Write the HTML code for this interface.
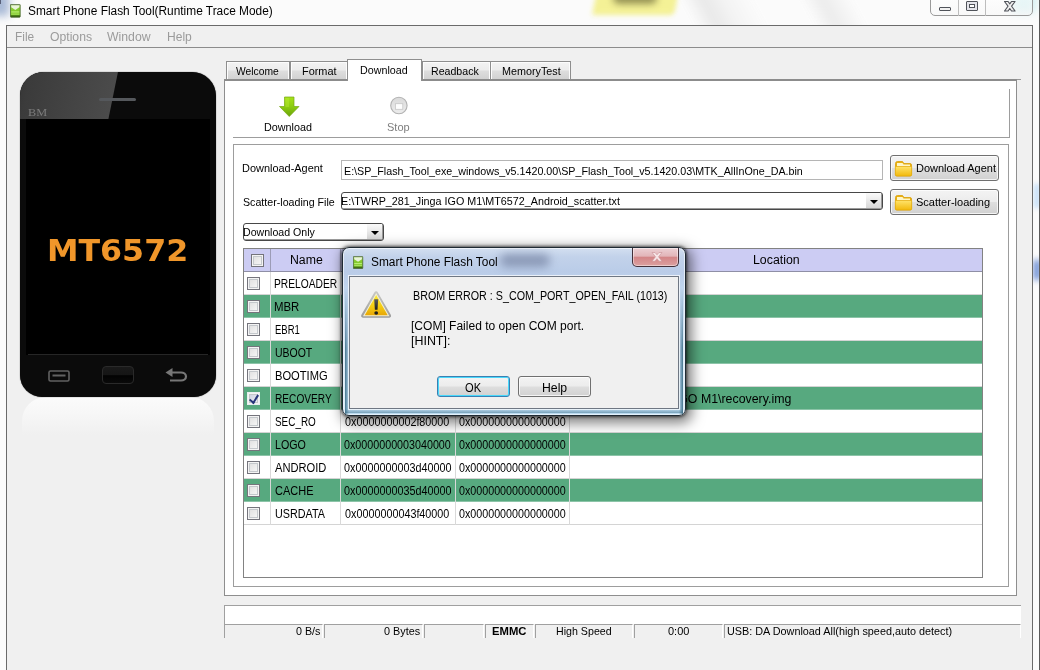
<!DOCTYPE html>
<html lang="en">
<head>
<meta charset="utf-8">
<title>Smart Phone Flash Tool(Runtime Trace Mode)</title>
<style>
*{box-sizing:border-box;margin:0;padding:0}
html,body{width:1040px;height:670px;overflow:hidden;background:#fff}
body{position:relative;font-family:"Liberation Sans",sans-serif;font-size:11px;color:#000}
.a{position:absolute}
.t{position:absolute;white-space:nowrap;line-height:1;font-size:11px;transform-origin:0 0}
/* ---------- window frame ---------- */
#glass{left:0;top:0;width:1040px;height:670px;background:#fbfbfb;overflow:hidden}
#client{left:6px;top:25px;width:1027px;height:660px;background:#f0f0f0;border:1px solid #6a6a6a}
#menuline{left:7px;top:47px;width:1025px;height:1px;background:#8c8c8c}
.menu{color:#9b9b9b;font-size:12px}
/* ---------- caption buttons ---------- */
#capbtn{left:930px;top:-4px;width:103px;height:20px;border:1px solid #9a9a9a;border-radius:0 0 5px 5px;background:linear-gradient(rgba(255,255,255,.55),rgba(246,246,246,.5))}
/* ---------- phone ---------- */
#phone{left:20px;top:72px;width:196px;height:325px;border-radius:24px 24px 22px 22px;background:#0b0b0b;overflow:hidden;box-shadow:0 0 1px #222}
#glare{left:-12px;top:-10px;width:112px;height:57px;background:linear-gradient(90deg,#2e2e2e 0%,#3b3b3b 22%,#444 65%,#4b4b4b 100%);transform-origin:0 0;transform:skewX(-11.500deg)}
#screen{left:6px;top:47px;width:184px;height:236px;background:#000}
#refl{left:22px;top:397px;width:192px;height:40px;background:linear-gradient(#fbfbfb,#f7f7f7 40%,#f0f0f0 95%);border-radius:24px 24px 0 0}
/* ---------- tabs ---------- */
.tab{position:absolute;top:61px;height:18px;border:1px solid #8e8e8e;border-bottom:none;background:linear-gradient(#f3f3f3 0%,#ececec 48%,#dedede 52%,#d2d2d2 100%);box-shadow:inset 1px 1px 0 #fcfcfc,inset -1px 0 0 #fcfcfc}
#tabsel{top:59px;height:22px;background:#fff;border-color:#8e8e8e;box-shadow:none}
#pane{left:224px;top:79px;width:793px;height:517px;background:#fff;border:1px solid #8e8e8e;border-top:2px solid #8c8c8c}
.ln{position:absolute;background:#9d9d9d}
/* ---------- widgets ---------- */
.btn{position:absolute;border:1px solid #707070;border-radius:3px;background:linear-gradient(#f3f3f3 0%,#ececec 48%,#dedede 52%,#d1d1d1 100%);box-shadow:inset 0 0 0 1px rgba(255,255,255,.75)}
.combo{position:absolute;background:#fff;border:1px solid #484848;border-radius:3px;box-shadow:inset -1px -1px 0 #9a9a9a}
.cbtn{position:absolute;top:0;bottom:1px;right:1px;width:15px;background:linear-gradient(#fafafa,#d8d8d8)}
.cbtn:after{content:"";position:absolute;left:4px;top:7px;border:4px solid transparent;border-top:4px solid #000;border-bottom:none}
/* ---------- table ---------- */
#tbl{left:243px;top:248px;width:740px;height:330px;background:#fff;border:1px solid #828282}
#thead{left:0;top:0;width:738px;height:22px;background:#ccccf3}
.row{position:absolute;left:0;width:738px;height:23px;border-bottom:1px solid #d4d4d4}
.g{background:#57a97f;border-bottom-color:#8cc4a8}
.vl{position:absolute;top:0;width:1px;height:276px;background:#d9d9d9}
.cb{position:absolute;left:3px;width:13px;height:13px;border:1px solid #74747c;background:linear-gradient(135deg,#dcdcdc,#fbfbfb);box-shadow:inset 0 0 0 1px #f4f4f4,inset 0 0 0 2px #c4c8cc}
.ck{border-color:#e8eef0;background:linear-gradient(135deg,#c8ccdc,#f4f6fa)}
.ck:after{content:"";position:absolute;left:3px;top:0px;width:4px;height:8px;border:solid #26357a;border-width:0 2px 2px 0;transform:rotate(40deg) skewX(8deg)}
.cell{position:absolute;white-space:nowrap;line-height:1;font-size:12px;transform-origin:0 0}
.s12{font-size:12px}
/* ---------- status ---------- */
.sc{position:absolute;top:624px;height:14px;border-right:1px solid #fff;border-top:1px solid #a0a0a0;border-left:1px solid #a0a0a0}
/* ---------- dialog ---------- */
#dlg{left:342px;top:247px;width:344px;height:169px;border-radius:7px;border:1px solid #1f2a33;background:linear-gradient(180deg,#d3dff0 0%,#c2d2ea 9px,#bacce8 24px,#c0d5ee 40px,#badaf0 100%);box-shadow:inset 0 0 0 1px rgba(255,255,255,.6),3px 4px 13px 3px rgba(0,0,0,.5),0 0 3px 1px rgba(0,0,0,.6);overflow:hidden}
#dlg i{position:absolute;display:block}
#dcl{left:349px;top:276px;width:330px;height:133px;background:#f0f0f0;border:1px solid #6f7783;box-shadow:0 0 0 1px rgba(255,255,255,.7)}
</style>
</head>
<body>
<div id="glass" class="a">
  <div class="a" style="left:-8px;top:-8px;width:17px;height:24px;background:#9fb2d2;filter:blur(4px);opacity:.9"></div>
  <div class="a" style="left:595px;top:-14px;width:82px;height:29px;background:#f4f196;filter:blur(2.500px);border-radius:3px;transform:skewX(-12deg)"></div>
  <div class="a" style="left:613px;top:-8px;width:44px;height:12px;background:#959254;filter:blur(3.500px);border-radius:6px"></div>
  <div class="a" style="left:690px;top:-10px;width:70px;height:50px;background:linear-gradient(90deg,#fbfbfb,#e9e9e9 30%,#f3f3f3 60%,#fbfbfb);transform:skewX(28deg);filter:blur(3px)"></div>
  <div class="a" style="left:810px;top:-10px;width:50px;height:50px;background:linear-gradient(90deg,#fbfbfb,#ececec 40%,#fbfbfb);transform:skewX(28deg);filter:blur(3px)"></div>
  <div class="a" style="left:1012px;top:-14px;width:24px;height:26px;background:#c8ecee;filter:blur(5px);opacity:.85"></div>
  <div class="a" style="left:0;top:0;width:1px;height:4px;background:#3c4258;opacity:.75"></div>
  <div class="a" style="left:1034px;top:184px;width:6px;height:24px;background:#c4dff8;filter:blur(2.500px)"></div>
  <div class="a" style="left:1034px;top:260px;width:6px;height:20px;background:#4f78cc;filter:blur(3px)"></div>
  <div class="a" style="left:1039px;top:0;width:1px;height:670px;background:#5a5a5a"></div>
</div>

<!-- title -->
<svg class="a" style="left:10px;top:4px" width="11" height="14" viewBox="0 0 11 14">
  <defs><linearGradient id="ig" x1="0" y1="0" x2="0" y2="1"><stop offset="0" stop-color="#b9c8a8"/><stop offset=".14" stop-color="#a4d860"/><stop offset=".3" stop-color="#86cc30"/><stop offset=".78" stop-color="#80c62a"/><stop offset=".88" stop-color="#467a14"/><stop offset="1" stop-color="#2a4e0c"/></linearGradient></defs>
  <rect x="0.400" y="0.400" width="9.800" height="12.800" rx=".6" fill="url(#ig)" stroke="#4a6630" stroke-width=".8"/>
  <path d="M1.300 1.600h8v1.700l-4 2.600l-4-2.600z" fill="#f0f5e6" opacity=".92"/>
  <rect x="1.300" y="7.400" width="8" height="1.100" fill="#bdf07c"/>
  <rect x="1.300" y="9.600" width="8" height="1" fill="#aee868"/>
</svg>
<span id="x_title" class="t s12" style="left:27.75px;top:5.0px;transform:scaleX(0.9900)">Smart Phone Flash Tool(Runtime Trace Mode)</span>

<div id="capbtn" class="a">
  <div class="a" style="left:27px;top:0;width:1px;height:19px;background:#bdbdbd"></div>
  <div class="a" style="left:54px;top:0;width:1px;height:19px;background:#bdbdbd"></div>
  <svg class="a" style="left:0;top:2px" width="101" height="16" viewBox="0 0 101 16">
    <rect x="8.500" y="8.500" width="11" height="3" rx=".5" fill="#f0f0f0" stroke="#50535a"/>
    <rect x="35.500" y="2.500" width="11" height="9" rx=".5" fill="#e4e4ea" stroke="#50535a"/>
    <rect x="38.500" y="5.500" width="5" height="3" fill="#fff" stroke="#50535a"/>
    <path d="M73.500 2.500h3.600l1.700 2.400 1.700-2.400h3.600l-3.500 4.700 3.500 4.800h-3.600l-1.700-2.500-1.700 2.500h-3.600l3.500-4.800z" fill="#efefef" stroke="#50535a" stroke-width="1.100" stroke-linejoin="round"/>
  </svg>
</div>

<div id="client" class="a"></div>
<div id="menuline" class="a"></div>
<span id="x_m1" class="t menu" style="left:14.77px;top:31.0px;transform:scaleX(0.9908)">File</span>
<span id="x_m2" class="t menu" style="left:49.52px;top:31.0px;transform:scaleX(1.0164)">Options</span>
<span id="x_m3" class="t menu" style="left:107.40px;top:31.0px;transform:scaleX(1.0209)">Window</span>
<span id="x_m4" class="t menu" style="left:166.68px;top:31.0px;transform:scaleX(1.0053)">Help</span>

<!-- phone -->
<div id="refl" class="a"></div>
<div id="phone" class="a">
  <div id="glare" class="a"></div>
  <div class="a" style="left:79px;top:26px;width:37px;height:3px;border-radius:2px;background:#55585c"></div>
  <span id="x_bm" class="t" style="left:8.35px;top:36.0px;font-family:'Liberation Serif',serif;font-size:10px;color:#7c7c7c;transform:scaleX(1.2255)">BM</span>
  <div id="screen" class="a"></div>
  <span id="x_mt" class="t" style="left:27.15px;top:164.5px;font-family:'DejaVu Sans',sans-serif;font-weight:bold;font-size:29.500px;color:#f0962a;transform:scaleX(1.0729)">MT6572</span>
  <div class="a" style="left:82px;top:294px;width:32px;height:18px;border-radius:4px;border:1px solid #2a2a2a;background:linear-gradient(#1a1a1a 0%,#151515 50%,#020202 54%,#0a0a0a 100%)"></div>
  <div class="a" style="left:8px;top:282px;width:180px;height:1px;background:#262626"></div>
  <svg class="a" style="left:26px;top:296px" width="26" height="16" viewBox="0 0 26 16">
    <rect x="3" y="3" width="20" height="10" rx="1.500" fill="none" stroke="#626262" stroke-width="1.600"/>
    <rect x="6.500" y="6.500" width="13" height="2" fill="#626262"/>
  </svg>
  <svg class="a" style="left:143px;top:294px" width="28" height="18" viewBox="0 0 28 18">
    <path d="M7 6.500h11a5 4 0 0 1 0 8h-11" fill="none" stroke="#777" stroke-width="2.200"/>
    <path d="M2.500 6.500l7-4.500v9z" fill="#777"/>
  </svg>
</div>

<!-- tabs -->
<div id="pane" class="a"></div>
<div class="a" style="left:1017px;top:79px;width:4px;height:1px;background:#9a9a9a"></div>
<div class="tab" style="left:226px;width:64px"></div>
<div class="tab" style="left:290px;width:58px"></div>
<div class="tab" style="left:422px;width:69px"></div>
<div class="tab" style="left:490px;width:81px"></div>
<div id="tabsel" class="tab" style="left:347px;width:75px"></div>
<span id="x_t1" class="t" style="left:236.07px;top:66.0px;transform:scaleX(0.9368)">Welcome</span>
<span id="x_t2" class="t" style="left:302.20px;top:66.0px;transform:scaleX(0.9922)">Format</span>
<span id="x_t3" class="t" style="left:360.10px;top:65.0px;transform:scaleX(0.9738)">Download</span>
<span id="x_t4" class="t" style="left:430.76px;top:66.0px;transform:scaleX(0.9639)">Readback</span>
<span id="x_t5" class="t" style="left:502.09px;top:66.0px;transform:scaleX(0.9798)">MemoryTest</span>

<!-- toolbar -->
<div class="ln" style="left:1009px;top:89px;width:1px;height:49px"></div>
<div class="ln" style="left:233px;top:137px;width:777px;height:1px"></div>
<svg class="a" style="left:278px;top:96px" width="22" height="22" viewBox="0 0 22 22">
  <defs><linearGradient id="ag" x1="0" y1="0" x2="0" y2="1"><stop offset="0" stop-color="#a6e218"/><stop offset=".5" stop-color="#8ccc10"/><stop offset="1" stop-color="#6aa30a"/></linearGradient></defs>
  <path d="M6.500 1h9.500v9.500h5L11.250 20.500 1.500 10.500h5z" fill="url(#ag)" stroke="#76a814" stroke-width=".7"/>
  <path d="M7.500 2h3.500v9h-3.500z" fill="#c3f040" opacity=".35"/>
</svg>
<span id="x_tb1" class="t" style="left:264.13px;top:122.0px;transform:scaleX(0.9787)">Download</span>
<svg class="a" style="left:389px;top:96px" width="20" height="20" viewBox="0 0 20 20">
  <defs><linearGradient id="sg" x1="0" y1="0" x2="0" y2="1"><stop offset="0" stop-color="#dadada"/><stop offset="1" stop-color="#ececec"/></linearGradient></defs>
  <circle cx="9.900" cy="9.500" r="8.200" fill="url(#sg)" stroke="#b2b2b2" stroke-width="1.100"/>
  <rect x="6.400" y="7.700" width="7.400" height="5.600" fill="#fdfdfd" stroke="#c6c6c6" stroke-width=".8"/>
</svg>
<span id="x_tb2" class="t" style="left:387.10px;top:122.0px;color:#7e7e7e;transform:scaleX(1.0002)">Stop</span>

<!-- inner frame -->
<div class="a" style="left:233px;top:144px;width:776px;height:443px;border:1px solid #9d9d9d;background:#fff"></div>
<span id="x_l1" class="t" style="left:242.19px;top:163.0px;transform:scaleX(0.9942)">Download-Agent</span>
<span id="x_l2" class="t" style="left:242.55px;top:197.0px;transform:scaleX(0.9680)">Scatter-loading File</span>
<div class="a" style="left:341px;top:160px;width:542px;height:20px;border:1px solid #b5b5b5;background:#fff"></div>
<span id="x_i1" class="t" style="left:344.10px;top:166.0px;transform:scaleX(0.9732)">E:\SP_Flash_Tool_exe_windows_v5.1420.00\SP_Flash_Tool_v5.1420.03\MTK_AllInOne_DA.bin</span>
<div class="combo" style="left:341px;top:192px;width:542px;height:18px"><div class="cbtn"></div></div>
<span id="x_i2" class="t" style="left:340.71px;top:196.0px;transform:scaleX(0.9789)">E:\TWRP_281_Jinga IGO M1\MT6572_Android_scatter.txt</span>
<div class="combo" style="left:243px;top:223px;width:141px;height:18px"><div class="cbtn"></div></div>
<span id="x_i3" class="t" style="left:243.31px;top:227.0px;transform:scaleX(0.9640)">Download Only</span>

<div class="btn" style="left:890px;top:155px;width:109px;height:26px"></div>
<div class="btn" style="left:890px;top:189px;width:109px;height:26px"></div>
<svg class="a" style="left:894px;top:160px" width="19" height="17" viewBox="0 0 19 17"><use href="#fold"/></svg>
<svg class="a" style="left:894px;top:194px" width="19" height="17" viewBox="0 0 19 17">
  <defs><linearGradient id="fg" x1="0" y1="0" x2="0" y2="1"><stop offset="0" stop-color="#ffe36a"/><stop offset="1" stop-color="#f2b90c"/></linearGradient>
  <g id="fold">
    <path d="M1.500 3.500q0-2 2-2h5l1.500 2h6q1.500 0 1.500 1.500v9.500q0 1.500-1.500 1.500h-13q-1.500 0-1.500-1.500z" fill="#e9b010" stroke="#d9a008" stroke-width=".8"/>
    <path d="M3 3h5.500l1 1.600h6.500v2h-13z" fill="#fff6c8"/>
    <path d="M1.300 6.500h16.400v8q0 1.500-1.500 1.500h-13.400q-1.500 0-1.500-1.500z" fill="url(#fg)" stroke="#e0a80a" stroke-width=".6"/>
  </g></defs>
  <use href="#fold"/>
</svg>
<span id="x_bt1" class="t" style="left:916.02px;top:163.0px;transform:scaleX(0.9978)">Download Agent</span>
<span id="x_bt2" class="t" style="left:916.25px;top:197.0px;transform:scaleX(1.0016)">Scatter-loading</span>

<!--table.html-start-->
<div id="tbl" class="a">
 <div id="thead" class="a"></div>
 <div class="a" style="left:0;top:22px;width:738px;height:1px;background:#8f8fa6"></div>
 <div class="a" style="left:26px;top:0;width:1px;height:22px;background:#9c9cb6"></div>
 <div class="a" style="left:96px;top:0;width:1px;height:22px;background:#9c9cb6"></div>
 <div class="a" style="left:211px;top:0;width:1px;height:22px;background:#9c9cb6"></div>
 <div class="a" style="left:325px;top:0;width:1px;height:22px;background:#9c9cb6"></div>
 <div class="cb" style="left:7px;top:5px"></div>
 <span id="x_h1" class="cell s12" style="top:5.0px;left:45.92px;transform:scaleX(1.0241)">Name</span>
 <span id="x_h2" class="cell s12" style="top:5.0px;left:117.52px;transform:scaleX(0.9350)">Begin Address</span>
 <span id="x_h3" class="cell s12" style="top:5.0px;left:236.53px;transform:scaleX(0.9284)">End Address</span>
 <span id="x_h4" class="cell s12" style="top:5.0px;left:508.68px;transform:scaleX(1.0288)">Location</span>
 <div class="row" style="top:23px">
  <div class="cb" style="top:5px"></div>
  <span id="x_n0" class="cell" style="left:30.49px;top:6.0px;transform:scaleX(0.8540)">PRELOADER</span>
  <span id="x_b0" class="cell" style="left:100.15px;top:6.0px;transform:scaleX(0.8965)">0x0000000000000000</span>
  <span id="x_e0" class="cell" style="left:215.16px;top:6.0px;transform:scaleX(0.8931)">0x0000000000000000</span>
 </div>
 <div class="row g" style="top:46px">
  <div class="cb" style="top:5px"></div>
  <span id="x_n1" class="cell" style="left:30.46px;top:6.0px;transform:scaleX(0.9499)">MBR</span>
  <span id="x_b1" class="cell" style="left:100.15px;top:6.0px;transform:scaleX(0.9035)">0x0000000000c00000</span>
  <span id="x_e1" class="cell" style="left:215.16px;top:6.0px;transform:scaleX(0.8931)">0x0000000000000000</span>
 </div>
 <div class="row" style="top:69px">
  <div class="cb" style="top:5px"></div>
  <span id="x_n2" class="cell" style="left:30.60px;top:6.0px;transform:scaleX(0.7917)">EBR1</span>
  <span id="x_b2" class="cell" style="left:100.15px;top:6.0px;transform:scaleX(0.9035)">0x0000000000c80000</span>
  <span id="x_e2" class="cell" style="left:215.16px;top:6.0px;transform:scaleX(0.8931)">0x0000000000000000</span>
 </div>
 <div class="row g" style="top:92px">
  <div class="cb" style="top:5px"></div>
  <span id="x_n3" class="cell" style="left:30.57px;top:6.0px;transform:scaleX(0.8737)">UBOOT</span>
  <span id="x_b3" class="cell" style="left:100.15px;top:6.0px;transform:scaleX(0.8965)">0x0000000002120000</span>
  <span id="x_e3" class="cell" style="left:215.16px;top:6.0px;transform:scaleX(0.8931)">0x0000000000000000</span>
 </div>
 <div class="row" style="top:115px">
  <div class="cb" style="top:5px"></div>
  <span id="x_n4" class="cell" style="left:30.52px;top:6.0px;transform:scaleX(0.9287)">BOOTIMG</span>
  <span id="x_b4" class="cell" style="left:100.15px;top:6.0px;transform:scaleX(0.8965)">0x0000000002180000</span>
  <span id="x_e4" class="cell" style="left:215.16px;top:6.0px;transform:scaleX(0.8931)">0x0000000000000000</span>
 </div>
 <div class="row g" style="top:138px">
  <div class="cb ck" style="top:5px"></div>
  <span id="x_n5" class="cell" style="left:30.51px;top:6.0px;transform:scaleX(0.8439)">RECOVERY</span>
  <span id="x_b5" class="cell" style="left:100.15px;top:6.0px;transform:scaleX(0.8965)">0x0000000002780000</span>
  <span id="x_e5" class="cell" style="left:215.10px;top:6.0px;transform:scaleX(0.9445)">0x0000000002d38bff</span>
  <span id="x_loc5" class="cell" style="left:311.57px;top:6px;transform:scaleX(1.0297)">E:\TWRP_281_Jinga IGO M1\recovery.img</span>
 </div>
 <div class="row" style="top:161px">
  <div class="cb" style="top:5px"></div>
  <span id="x_n6" class="cell" style="left:30.66px;top:6.0px;transform:scaleX(0.8259)">SEC_RO</span>
  <span id="x_b6" class="cell" style="left:101.44px;top:6.0px;transform:scaleX(0.8988)">0x0000000002f80000</span>
  <span id="x_e6" class="cell" style="left:215.16px;top:6.0px;transform:scaleX(0.8931)">0x0000000000000000</span>
 </div>
 <div class="row g" style="top:184px">
  <div class="cb" style="top:5px"></div>
  <span id="x_n7" class="cell" style="left:30.58px;top:6.0px;transform:scaleX(0.8894)">LOGO</span>
  <span id="x_b7" class="cell" style="left:100.15px;top:6.0px;transform:scaleX(0.8940)">0x0000000003040000</span>
  <span id="x_e7" class="cell" style="left:215.16px;top:6.0px;transform:scaleX(0.8931)">0x0000000000000000</span>
 </div>
 <div class="row" style="top:207px">
  <div class="cb" style="top:5px"></div>
  <span id="x_n8" class="cell" style="left:31.19px;top:6.0px;transform:scaleX(0.9274)">ANDROID</span>
  <span id="x_b8" class="cell" style="left:100.15px;top:6.0px;transform:scaleX(0.8999)">0x0000000003d40000</span>
  <span id="x_e8" class="cell" style="left:215.16px;top:6.0px;transform:scaleX(0.8931)">0x0000000000000000</span>
 </div>
 <div class="row g" style="top:230px">
  <div class="cb" style="top:5px"></div>
  <span id="x_n9" class="cell" style="left:30.80px;top:6.0px;transform:scaleX(0.9171)">CACHE</span>
  <span id="x_b9" class="cell" style="left:100.15px;top:6.0px;transform:scaleX(0.8999)">0x0000000035d40000</span>
  <span id="x_e9" class="cell" style="left:215.16px;top:6.0px;transform:scaleX(0.8931)">0x0000000000000000</span>
 </div>
 <div class="row" style="top:253px">
  <div class="cb" style="top:5px"></div>
  <span id="x_n10" class="cell" style="left:30.53px;top:6.0px;transform:scaleX(0.8985)">USRDATA</span>
  <span id="x_b10" class="cell" style="left:101.44px;top:6.0px;transform:scaleX(0.8988)">0x0000000043f40000</span>
  <span id="x_e10" class="cell" style="left:215.16px;top:6.0px;transform:scaleX(0.8931)">0x0000000000000000</span>
 </div>
 <div class="vl" style="left:26px;top:23px;height:253px"></div>
 <div class="vl" style="left:96px;top:23px;height:253px"></div>
 <div class="vl" style="left:211px;top:23px;height:253px"></div>
 <div class="vl" style="left:325px;top:23px;height:253px"></div>
</div>
<!--table.html-end-->
<!--status.html-start-->
<div class="a" style="left:224px;top:605px;width:797px;height:19px;background:#fff;border-top:1px solid #a0a0a0;border-left:1px solid #a0a0a0"></div>
<div class="sc" style="left:224px;width:99px"></div>
<div class="sc" style="left:324px;width:99px"></div>
<div class="sc" style="left:424px;width:60px"></div>
<div class="sc" style="left:485px;width:49px"></div>
<div class="sc" style="left:535px;width:98px"></div>
<div class="sc" style="left:634px;width:89px"></div>
<div class="sc" style="left:724px;width:297px"></div>
<span id="x_s1" class="t" style="left:295.57px;top:626.0px;transform:scaleX(0.9734)">0 B/s</span>
<span id="x_s2" class="t" style="left:383.86px;top:626.0px;transform:scaleX(0.9847)">0 Bytes</span>
<span id="x_s3" class="t" style="left:492.26px;top:626.0px;font-weight:bold;transform:scaleX(1.0240)">EMMC</span>
<span id="x_s4" class="t" style="left:555.56px;top:626.0px;transform:scaleX(0.9682)">High Speed</span>
<span id="x_s5" class="t" style="left:667.78px;top:626.0px;transform:scaleX(0.9982)">0:00</span>
<span id="x_s6" class="t" style="left:726.95px;top:626.0px;transform:scaleX(0.9844)">USB: DA Download All(high speed,auto detect)</span>

<!--status.html-end-->
<!--dialog.html-start-->
<div id="dlg" class="a">
  <i style="left:1px;top:40px;width:5px;height:126px;background:linear-gradient(90deg,rgba(255,255,255,.5) 0,rgba(255,255,255,.5) 1px,rgba(40,92,118,.8) 1px,rgba(40,92,118,0));-webkit-mask-image:linear-gradient(180deg,transparent,#000 60px);mask-image:linear-gradient(180deg,transparent,#000 60px)"></i>
  <i style="right:1px;top:40px;width:5px;height:126px;background:linear-gradient(270deg,rgba(255,255,255,.5) 0,rgba(255,255,255,.5) 1px,rgba(40,92,118,.8) 1px,rgba(40,92,118,0));-webkit-mask-image:linear-gradient(180deg,transparent,#000 60px);mask-image:linear-gradient(180deg,transparent,#000 60px)"></i>
  <i style="left:2px;bottom:2px;width:338px;height:4px;background:linear-gradient(0deg,rgba(40,92,118,.45),rgba(40,92,118,0))"></i>
</div>
<div class="a" style="left:500px;top:254px;width:50px;height:13px;background:#5d6a8c;filter:blur(5px);opacity:.55;border-radius:6px"></div>
<div id="dcl" class="a"></div>
<svg class="a" style="left:353px;top:255.5px" width="10.500" height="13.400" viewBox="0 0 11 14"><rect x="0.400" y="0.400" width="9.800" height="12.800" rx=".6" fill="url(#ig)" stroke="#4a6630" stroke-width=".8"/><path d="M1.300 1.600h8v1.700l-4 2.600l-4-2.600z" fill="#f0f5e6" opacity=".92"/><rect x="1.300" y="7.400" width="8" height="1.100" fill="#bdf07c"/><rect x="1.300" y="9.600" width="8" height="1" fill="#aee868"/></svg>
<span id="x_dt" class="t s12" style="left:370.96px;top:256.0px;transform:scaleX(0.9905)">Smart Phone Flash Tool</span>
<div id="dclose" class="a" style="left:632px;top:248px;width:47px;height:19px;border:1px solid #43303a;border-top:none;border-radius:0 0 5px 5px;background:linear-gradient(#ecd0d4 0%,#e2b4b8 46%,#d38486 50%,#dba0a0 100%);box-shadow:inset 0 0 0 1px rgba(255,255,255,.45)"></div>
<svg class="a" style="left:650px;top:251px" width="14" height="12" viewBox="0 0 14 12"><path d="M2 1.500h3l2 2.300 2-2.300h3l-3.500 4.300 3.500 4.400h-3l-2-2.500-2 2.500h-3l3.500-4.400z" fill="#f7e6e8" stroke="#c98f94" stroke-width=".6"/></svg>
<svg class="a" style="left:360px;top:290px" width="32" height="30" viewBox="0 0 32 30">
  <defs><linearGradient id="wg" x1="0" y1="0" x2="0" y2="1"><stop offset="0" stop-color="#fbe93a"/><stop offset=".55" stop-color="#f4cd12"/><stop offset="1" stop-color="#e8a606"/></linearGradient>
  <linearGradient id="wo" x1="0" y1="0" x2="0" y2="1"><stop offset="0" stop-color="#c9c9c4"/><stop offset="1" stop-color="#9c9c9c"/></linearGradient>
  <linearGradient id="we" x1="0" y1="0" x2="0" y2="1"><stop offset="0" stop-color="#5a5a5a"/><stop offset="1" stop-color="#1e1e1e"/></linearGradient></defs>
  <path d="M16.200 1.300q1.100 0 1.700 1.100l12.900 22.400q1 2.500-1.500 2.900h-26.400q-2.500-.4-1.500-2.900l12.900-22.400q.6-1.100 1.900-1.100z" fill="url(#wo)"/>
  <path d="M16.200 3l13.200 23.200h-26.400z" fill="#f3f0d6"/>
  <path d="M16.200 5l11.500 20.300h-23z" fill="url(#wg)"/>
  <path d="M14.200 9.200h4l-.7 10.600h-2.600z" fill="url(#we)"/>
  <ellipse cx="16.200" cy="23" rx="1.900" ry="1.700" fill="#1e1e1e"/>
</svg>
<span id="x_d1" class="t s12" style="left:413.17px;top:290.0px;transform:scaleX(0.8934)">BROM ERROR : S_COM_PORT_OPEN_FAIL (1013)</span>
<span id="x_d2" class="t s12" style="left:410.52px;top:320.0px;transform:scaleX(1.0023)">[COM] Failed to open COM port.</span>
<span id="x_d3" class="t s12" style="left:410.52px;top:335.0px;transform:scaleX(1.0360)">[HINT]:</span>
<div class="btn" style="left:437px;top:376px;width:73px;height:21px;border-color:#3c7fb1;box-shadow:inset 0 0 0 1px #48d8fb"></div>
<div class="btn" style="left:518px;top:376px;width:73px;height:21px"></div>
<span id="x_ok" class="t s12" style="left:464.91px;top:381.5px;transform:scaleX(0.9256)">OK</span>
<span id="x_hp" class="t s12" style="left:542.01px;top:381.5px;transform:scaleX(1.0191)">Help</span>

<!--dialog.html-end-->
</body>
</html>
